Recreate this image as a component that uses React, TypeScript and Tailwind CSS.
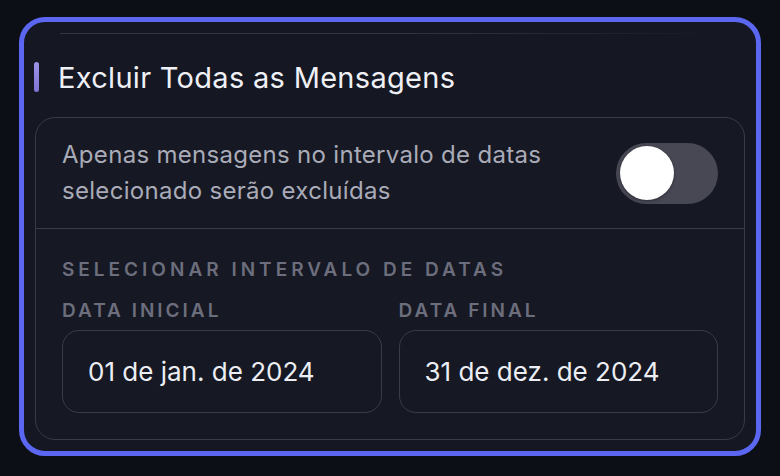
import React from "react";

export default function App() {
  return (
    <div
      className="w-[780px] h-[476px] bg-[#0d0f17] pt-[17px] pl-[19px]"
      style={{ fontFamily: "Inter, 'Noto Sans', sans-serif" }}
    >
      <div className="w-[742px] h-[439px] rounded-[26px] border-[5px] border-[#5b67f0] bg-[#151722] px-[11px] flex flex-col">
        <div className="h-[11px]" />
        <div className="ml-[25px] mr-[20px] h-px bg-gradient-to-r from-[#34363f] via-[#34363f] to-transparent" />
        <div className="flex items-center mt-[28px] h-[30px]">
          <div className="w-[5px] h-[30px] rounded-full bg-gradient-to-b from-[#9d93e4] to-[#7f74d6] ml-[-1px]" />
          <div className="ml-[19px] text-[29px] font-normal tracking-[0.3px] text-[#eef0f6] leading-none">
            Excluir Todas as Mensagens
          </div>
        </div>
        <div className="mt-[25px] flex-1 mb-[11px] rounded-[20px] border border-[#393b48] bg-[#161823] flex flex-col">
          <div className="h-[111px] flex items-center justify-between pl-[26px] pr-[26px] border-b border-[#393b48]">
            <div className="text-[24px] leading-[36px] tracking-[0.3px] text-[#a9abb8]">
              Apenas mensagens no intervalo de datas
              <br />
              selecionado serão excluídas
            </div>
            <div className="w-[102px] h-[61px] rounded-full bg-[#474854] flex items-center pl-[4px]">
              <div className="w-[54px] h-[54px] rounded-full bg-white shadow-[0_1px_3px_rgba(0,0,0,0.4)]" />
            </div>
          </div>
          <div className="flex-1 px-[26px] pt-[30px]">
            <div className="text-[19px] font-semibold tracking-[4px] text-[#6c6e7d] leading-[22px] whitespace-nowrap">
              SELECIONAR INTERVALO DE DATAS
            </div>
            <div className="mt-[19px] grid grid-cols-2 gap-[17px]">
              <div className="flex flex-col">
                <div className="text-[19px] font-semibold tracking-[3px] text-[#6c6e7d] leading-[22px]">
                  DATA INICIAL
                </div>
                <div className="mt-[8px] h-[83px] rounded-[17px] border border-[#393b48] flex items-center pl-[25px] text-[26px] text-[#eceef4]">
                  01 de jan. de 2024
                </div>
              </div>
              <div className="flex flex-col">
                <div className="text-[19px] font-semibold tracking-[3px] text-[#6c6e7d] leading-[22px]">
                  DATA FINAL
                </div>
                <div className="mt-[8px] h-[83px] rounded-[17px] border border-[#393b48] flex items-center pl-[25px] text-[26px] text-[#eceef4]">
                  31 de dez. de 2024
                </div>
              </div>
            </div>
          </div>
        </div>
      </div>
    </div>
  );
}
